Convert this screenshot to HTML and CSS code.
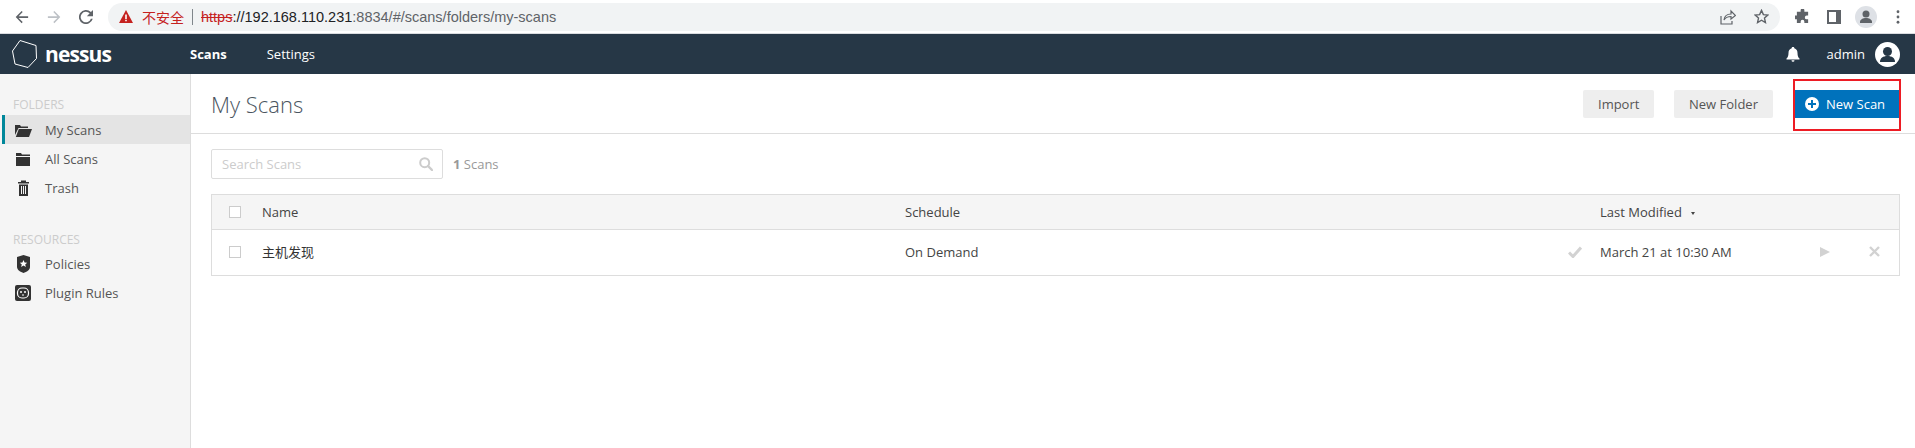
FILE: index.html
```html
<!DOCTYPE html>
<html lang="en">
<head>
    <meta charset="UTF-8">
    <title>Nessus / Folders / My Scans</title>
    <link rel="stylesheet" href="styles.css">
</head>
<body>
    <div class="browser-bar">
        <div class="browser-nav">
            <svg class="b-icon" viewBox="0 0 16 16"><path d="M15 7H4.200l4.600-4.600L7.600 1 .8 8l6.800 7 1.200-1.400L4.200 9H15z" fill="#5f6368"/></svg>
            <svg class="b-icon" viewBox="0 0 16 16"><path d="M1 7h10.800L7.200 2.400 8.400 1l6.800 7-6.800 7-1.200-1.400L11.800 9H1z" fill="#bdc1c6"/></svg>
            <svg class="b-icon" viewBox="0 0 16 16"><path d="M13.600 2.400A8 8 0 1 0 15.700 10h-2.100a6 6 0 1 1-1.400-6.200L9 7h7V0z" fill="#5f6368"/></svg>
        </div>
        <div class="omnibox">
            <svg class="warn-icon" viewBox="0 0 14 13"><path d="M7 0l7 13H0z" fill="#c5221f"/><path d="M6.200 4.500h1.600v4.400H6.200zM6.200 9.700h1.600v1.600H6.200z" fill="#fff"/></svg>
            <span class="warn-text">不安全</span>
            <span class="omni-divider"></span>
            <span class="url"><s class="url-https">https</s>://192.168.110.231<span class="url-dim">:8834/#/scans/folders/my-scans</span></span>
            <span class="omni-right">
                <svg class="omni-share" viewBox="0 0 16 16"><path d="M1 7v8h11v-3M4 11c.5-4 3.500-6 7-6V2l4.500 4.500L11 10V7.500c-3 0-5.500 1-7 3.500z" fill="none" stroke="#5f6368" stroke-width="1.200"/></svg>
                <svg class="omni-star" viewBox="0 0 16 16"><path d="M8 1.500l2 4.500 4.800.5-3.600 3.200 1 4.800L8 12l-4.200 2.500 1-4.800L1.200 6.500 6 6z" fill="none" stroke="#5f6368" stroke-width="1.500"/></svg>
            </span>
        </div>
        <div class="browser-tools">
            <svg class="t-puzzle" viewBox="0 0 16 16"><path d="M6 1.500a2 2 0 0 1 4 0V3h4v4h-1.500a2 2 0 0 0 0 4H14v4h-4v-1.500a2 2 0 0 0-4 0V15H2v-4H.5a2 2 0 0 1 0-4H2V3h4z" fill="#5f6368"/></svg>
            <svg class="t-panel" viewBox="0 0 14 14"><path d="M0 0h14v14H0zM2 2v10h7V2z" fill="#5f6368" fill-rule="evenodd"/></svg>
            <span class="t-avatar"><svg viewBox="0 0 22 22"><circle cx="11" cy="8" r="3.500" fill="#5f6368"/><path d="M5 16c0-2.500 3-4 6-4s6 1.500 6 4v1H5z" fill="#5f6368"/></svg></span>
            <svg class="t-dots" viewBox="0 0 4 16"><circle cx="2" cy="2" r="1.600" fill="#5f6368"/><circle cx="2" cy="8" r="1.600" fill="#5f6368"/><circle cx="2" cy="14" r="1.600" fill="#5f6368"/></svg>
        </div>
    </div>

    <header class="app-header">
        <div class="logo">
            <svg class="logo-hex" viewBox="0 0 25 28"><path d="M8 .5l16 5 .5 13L16 27.500 3 24 .5 11z" fill="none" stroke="#fff" stroke-width="1"/></svg>
            <span class="logo-text">nessus</span>
        </div>
        <nav class="main-nav">
            <a class="main-nav-item active">Scans</a>
            <a class="main-nav-item">Settings</a>
        </nav>
        <div class="header-right">
            <svg class="bell" viewBox="0 0 14 15"><path d="M7 0c1 0 1.300.6 1.300 1.200C10.500 1.800 11.500 3.500 11.500 6c0 3 .8 4.500 2 5.500v1H.5v-1c1.200-1 2-2.500 2-5.500 0-2.500 1-4.200 3.200-4.800C5.700.6 6 0 7 0zM5.500 13.300h3A1.500 1.500 0 0 1 5.500 13.300z" fill="#fff"/></svg>
            <span class="user-name">admin</span>
            <span class="user-avatar"><svg viewBox="0 0 25 25"><circle cx="12.500" cy="9.500" r="4.500" fill="#263746"/><path d="M5 20c0-4 3-6 7.500-6s7.500 2 7.500 6z" fill="#263746"/></svg></span>
        </div>
    </header>

    <div class="app-body">
        <aside class="sidebar">
            <div class="side-title">FOLDERS</div>
            <a class="side-item active">
                <svg class="side-icon" viewBox="0 0 17 14"><path d="M0 12V2h5l1 1.500h7V5H3.500z" fill="#333"/><path d="M3.800 6H17l-3 8H.8z" fill="#333"/></svg>
                My Scans
            </a>
            <a class="side-item">
                <svg class="side-icon" viewBox="0 0 17 14"><path d="M1 1h5l1 1.500h8V4H1zM1 5h14v9H1z" fill="#333"/></svg>
                All Scans
            </a>
            <a class="side-item">
                <svg class="side-icon" viewBox="0 0 17 16"><path d="M3 2h3V.500h5V2h3v1.500H3zM4 4.500h9V16H4zM6 6v8h1V6zm2 0v8h1V6zm2 0v8h1V6z" fill="#333" fill-rule="evenodd"/></svg>
                Trash
            </a>
            <div class="side-title second">RESOURCES</div>
            <a class="side-item">
                <svg class="side-icon" viewBox="0 0 17 18"><path d="M8.500 0L15 2v10c0 3-3.500 5-6.500 6C5.500 17 2 15 2 12V2z" fill="#333"/><path d="M8.500 5l1.100 2.500 2.600.2-2 1.700.7 2.600-2.400-1.400-2.400 1.400.7-2.600-2-1.700 2.600-.2z" fill="#fff"/></svg>
                Policies
            </a>
            <a class="side-item">
                <svg class="side-icon" viewBox="0 0 17 16"><rect x="0" y="0" width="16" height="16" rx="2" fill="#333"/><rect x="2.500" y="3" width="11" height="10" rx="4.500" fill="none" stroke="#fff" stroke-width="1.200"/><circle cx="6" cy="7" r="1" fill="#fff"/><circle cx="10" cy="7" r="1" fill="#fff"/><path d="M7 10h2" stroke="#fff" stroke-width="1.200"/></svg>
                Plugin Rules
            </a>
        </aside>

        <main class="content">
            <div class="title-bar">
                <h1 class="page-title">My Scans</h1>
                <div class="title-actions">
                    <button class="btn btn-import">Import</button>
                    <button class="btn btn-folder">New Folder</button>
                    <button class="btn primary">
                        <svg class="plus-icon" viewBox="0 0 14 14"><circle cx="7" cy="7" r="7" fill="#fff"/><path d="M6 3h2v3h3v2H8v3H6V8H3V6h3z" fill="#0072bc"/></svg>
                        New Scan
                        <span class="red-mark"></span>
                    </button>
                </div>
            </div>

            <div class="content-inner">
                <div class="filter-row">
                    <div class="search-box">
                        <span class="search-placeholder">Search Scans</span>
                        <svg class="search-icon" viewBox="0 0 14 14"><circle cx="5.700" cy="5.700" r="4.500" fill="none" stroke="#ccc" stroke-width="2"/><path d="M9 9l4 4" stroke="#ccc" stroke-width="2.400" stroke-linecap="round"/></svg>
                    </div>
                    <span class="scan-count"><b>1</b> Scans</span>
                </div>

                <div class="scan-table">
                    <div class="scan-row head">
                        <span class="check"></span>
                        <span>Name</span>
                        <span>Schedule</span>
                        <span></span>
                        <span>Last Modified <i class="sort-arrow"></i></span>
                        <span></span>
                        <span></span>
                    </div>
                    <div class="scan-row body-row">
                        <span class="check"></span>
                        <span class="scan-name">主机发现</span>
                        <span>On Demand</span>
                        <svg class="row-check" viewBox="0 0 14 12"><path d="M1 6.500l4 4 8-9" fill="none" stroke="#d2d2d2" stroke-width="3"/></svg>
                        <span>March 21 at 10:30 AM</span>
                        <svg class="row-play" viewBox="0 0 10 10"><path d="M0 0l10 5-10 5z" fill="#d2d2d2"/></svg>
                        <svg class="row-x" viewBox="0 0 11 11"><path d="M1 1l9 9M10 1l-9 9" stroke="#d2d2d2" stroke-width="2.400"/></svg>
                    </div>
                </div>
            </div>
        </main>
    </div>
</body>
</html>
```

FILE: styles.css
```css
* {
    box-sizing: border-box;
}
html, body {
    height: 100%;
}
body {
    margin: 0;
    font-family: "Open Sans", "Noto Sans CJK SC", sans-serif;
    font-size: 13px;
    color: #444;
    background-color: #fff;
    overflow: hidden;
}

/* browser chrome */
.browser-bar {
    display: flex;
    align-items: center;
    height: 34px;
    padding-left: 15px;
    border-bottom: 1px solid #dadce0;
}
.browser-nav {
    display: flex;
    gap: 18px;
    width: 93px;
}
.b-icon {
    width: 14px;
    height: 14px;
}
.omnibox {
    display: flex;
    align-items: center;
    width: 1672px;
    height: 28px;
    padding-left: 11px;
    padding-right: 11px;
    background-color: #f1f3f4;
    border-radius: 14px;
    font-family: "Liberation Sans", "Noto Sans CJK SC", sans-serif;
}
.warn-icon {
    width: 14px;
    height: 13px;
}
.warn-text {
    margin-left: 9px;
    font-size: 14px;
    color: #c5221f;
}
.omni-divider {
    width: 1px;
    height: 16px;
    margin: 0 8px;
    background-color: #80868b;
}
.url {
    font-size: 14.5px;
    color: #202124;
}
.url-https {
    color: #c5221f;
}
.url-dim {
    color: #5f6368;
}
.omni-right {
    display: flex;
    align-items: center;
    gap: 18px;
    margin-left: auto;
}
.omni-share {
    width: 16px;
    height: 16px;
}
.omni-star {
    width: 15px;
    height: 15px;
}
.browser-tools {
    display: flex;
    align-items: center;
    margin-left: 15px;
}
.t-puzzle {
    width: 15px;
    height: 15px;
}
.t-panel {
    width: 14px;
    height: 14px;
    margin-left: 17px;
}
.t-avatar {
    display: block;
    width: 22px;
    height: 22px;
    margin-left: 14px;
    background-color: #dee1e6;
    border-radius: 50%;
}
.t-avatar svg {
    display: block;
}
.t-dots {
    width: 4px;
    height: 14px;
    margin-left: 19px;
}

/* app header */
.app-header {
    display: flex;
    align-items: center;
    height: 40px;
    background-color: #263746;
    color: #fff;
}
.logo {
    display: flex;
    align-items: center;
    width: 190px;
    padding-left: 12px;
}
.logo-hex {
    width: 25px;
    height: 28px;
}
.logo-text {
    margin-left: 8px;
    font-size: 21px;
    font-weight: 700;
    letter-spacing: -0.9px;
}
.main-nav {
    display: flex;
    gap: 40px;
}
.main-nav-item.active {
    font-weight: 700;
}
.header-right {
    display: flex;
    align-items: center;
    margin-left: auto;
    padding-right: 15px;
}
.bell {
    width: 14px;
    height: 15px;
}
.user-name {
    margin-left: 27px;
}
.user-avatar {
    display: block;
    width: 25px;
    height: 25px;
    margin-left: 10px;
    background-color: #fff;
    border-radius: 50%;
    overflow: hidden;
}
.user-avatar svg {
    display: block;
}

/* body */
.app-body {
    display: flex;
    height: calc(100% - 74px);
}
.sidebar {
    width: 191px;
    padding-top: 22px;
    padding-left: 2px;
    background-color: #f5f5f5;
    border-right: 1px solid #ddd;
}
.side-title {
    height: 19px;
    padding-left: 11px;
    font-size: 12px;
    line-height: 18px;
    color: #ccc;
}
.side-title.second {
    height: 18px;
    margin-top: 29px;
}
.side-item {
    display: flex;
    align-items: center;
    height: 29px;
    color: #555;
    padding-left: 3px;
}
.side-item.active {
    background-color: #e4e4e4;
    border-left: 3px solid #00879a;
    padding-left: 0;
}
.side-icon {
    width: 17px;
    height: 18px;
    margin-left: 10px;
    margin-right: 13px;
}

.content {
    flex: 1;
}
.title-bar {
    display: flex;
    align-items: center;
    height: 60px;
    padding: 0 15px 0 20px;
    border-bottom: 1px solid #ddd;
}
.page-title {
    margin: 0;
    font-size: 22px;
    font-weight: 300;
    color: #4a5560;
}
.title-actions {
    display: flex;
    gap: 20px;
    margin-left: auto;
}
.btn {
    position: relative;
    height: 28px;
    padding: 0 15px;
    border: 0;
    border-radius: 2px;
    background-color: #eee;
    color: #555;
    font-family: inherit;
    font-size: 13px;
}
.btn-import {
    width: 71px;
}
.btn-folder {
    width: 99px;
}
.btn.primary {
    display: flex;
    align-items: center;
    width: 105px;
    margin-left: 2px;
    padding: 0 0 0 10px;
    border-radius: 0;
    background-color: #0072bc;
    color: #fff;
}
.plus-icon {
    width: 14px;
    height: 14px;
    margin-right: 7px;
}
/* the red box somebody drew on the screenshot */
.red-mark {
    position: absolute;
    left: -2px;
    top: -11px;
    width: 108px;
    height: 52px;
    border: 2px solid #ed1c24;
}

.content-inner {
    padding: 15px 15px 0 20px;
}
.filter-row {
    display: flex;
    align-items: center;
    height: 30px;
}
.search-box {
    display: flex;
    align-items: center;
    justify-content: space-between;
    width: 232px;
    height: 30px;
    padding: 0 9px 0 10px;
    border: 1px solid #ddd;
    border-radius: 2px;
}
.search-placeholder {
    color: #ccc;
}
.search-icon {
    width: 14px;
    height: 14px;
}
.scan-count {
    margin-left: 10px;
    color: #999;
}
.scan-table {
    margin-top: 15px;
    border: 1px solid #ddd;
}
.scan-row {
    display: grid;
    grid-template-columns: 50px 643px 1fr 32px 220px 49px 30px;
    align-items: center;
    height: 45px;
}
.scan-row.head {
    height: 35px;
    background-color: #f5f5f5;
    border-bottom: 1px solid #ddd;
}
.scan-row.body-row {
    padding-bottom: 2px;
}
.check {
    width: 12px;
    height: 12px;
    margin-left: 17px;
    border: 1px solid #ccc;
    background-color: #fff;
}
.scan-name {
    font-family: "Noto Sans CJK SC", sans-serif;
    color: #333;
}
.sort-arrow {
    display: inline-block;
    width: 0;
    height: 0;
    margin-left: 6px;
    vertical-align: 2px;
    border-left: 2.5px solid transparent;
    border-right: 2.5px solid transparent;
    border-top: 3px solid #444;
}
.row-check {
    width: 14px;
    height: 12px;
}
.row-play {
    width: 10px;
    height: 10px;
}
.row-x {
    width: 11px;
    height: 11px;
}
```
